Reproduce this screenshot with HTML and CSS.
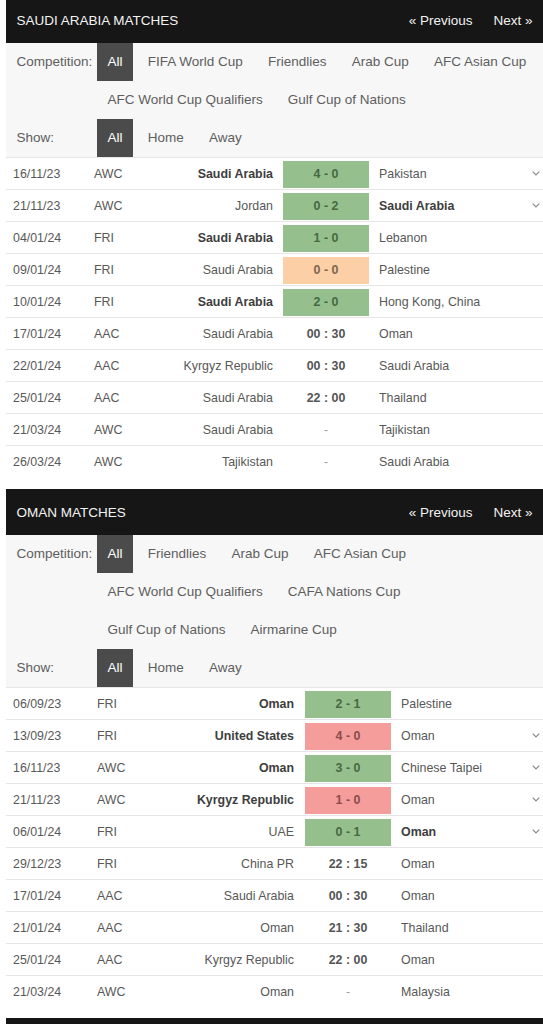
FILE: index.html
```html
<!DOCTYPE html>
<html lang="en">
<head>
<meta charset="utf-8">
<title>Matches</title>
<link rel="stylesheet" href="styles.css">
</head>
<body>
<div class="page">

  <section class="block block--sa">
    <div class="block-head">
      <span class="block-title">SAUDI ARABIA MATCHES</span>
      <nav class="pager"><a class="pager-link">« Previous</a><a class="pager-link">Next »</a></nav>
    </div>
    <div class="filters">
      <div class="filter-row">
        <span class="filter-label">Competition:</span>
        <div class="filter-items">
          <span class="chip is-active">All</span>
          <span class="chip">FIFA World Cup</span>
          <span class="chip">Friendlies</span>
          <span class="chip">Arab Cup</span>
          <span class="chip">AFC Asian Cup</span>
          <span class="chip">AFC World Cup Qualifiers</span>
          <span class="chip">Gulf Cup of Nations</span>
        </div>
      </div>
      <div class="filter-row">
        <span class="filter-label">Show:</span>
        <div class="filter-items">
          <span class="chip is-active">All</span>
          <span class="chip">Home</span>
          <span class="chip">Away</span>
        </div>
      </div>
    </div>
    <div class="matches">
      <div class="match"><span class="m-date">16/11/23</span><span class="m-comp">AWC</span><span class="m-home b">Saudi Arabia</span><span class="m-score win">4 - 0</span><span class="m-away">Pakistan</span><span class="m-more"><svg class="chev" viewBox="0 0 8 5"><polyline points="0.7,0.7 4,4 7.3,0.7"/></svg></span></div>
      <div class="match"><span class="m-date">21/11/23</span><span class="m-comp">AWC</span><span class="m-home">Jordan</span><span class="m-score win">0 - 2</span><span class="m-away b">Saudi Arabia</span><span class="m-more"><svg class="chev" viewBox="0 0 8 5"><polyline points="0.7,0.7 4,4 7.3,0.7"/></svg></span></div>
      <div class="match"><span class="m-date">04/01/24</span><span class="m-comp">FRI</span><span class="m-home b">Saudi Arabia</span><span class="m-score win">1 - 0</span><span class="m-away">Lebanon</span><span class="m-more"></span></div>
      <div class="match"><span class="m-date">09/01/24</span><span class="m-comp">FRI</span><span class="m-home">Saudi Arabia</span><span class="m-score draw">0 - 0</span><span class="m-away">Palestine</span><span class="m-more"></span></div>
      <div class="match"><span class="m-date">10/01/24</span><span class="m-comp">FRI</span><span class="m-home b">Saudi Arabia</span><span class="m-score win">2 - 0</span><span class="m-away">Hong Kong, China</span><span class="m-more"></span></div>
      <div class="match"><span class="m-date">17/01/24</span><span class="m-comp">AAC</span><span class="m-home">Saudi Arabia</span><span class="m-score time">00 : 30</span><span class="m-away">Oman</span><span class="m-more"></span></div>
      <div class="match"><span class="m-date">22/01/24</span><span class="m-comp">AAC</span><span class="m-home">Kyrgyz Republic</span><span class="m-score time">00 : 30</span><span class="m-away">Saudi Arabia</span><span class="m-more"></span></div>
      <div class="match"><span class="m-date">25/01/24</span><span class="m-comp">AAC</span><span class="m-home">Saudi Arabia</span><span class="m-score time">22 : 00</span><span class="m-away">Thailand</span><span class="m-more"></span></div>
      <div class="match"><span class="m-date">21/03/24</span><span class="m-comp">AWC</span><span class="m-home">Saudi Arabia</span><span class="m-score tbd">-</span><span class="m-away">Tajikistan</span><span class="m-more"></span></div>
      <div class="match"><span class="m-date">26/03/24</span><span class="m-comp">AWC</span><span class="m-home">Tajikistan</span><span class="m-score tbd">-</span><span class="m-away">Saudi Arabia</span><span class="m-more"></span></div>
    </div>
  </section>

  <section class="block block--om">
    <div class="block-head">
      <span class="block-title">OMAN MATCHES</span>
      <nav class="pager"><a class="pager-link">« Previous</a><a class="pager-link">Next »</a></nav>
    </div>
    <div class="filters">
      <div class="filter-row">
        <span class="filter-label">Competition:</span>
        <div class="filter-items">
          <span class="chip is-active">All</span>
          <span class="chip">Friendlies</span>
          <span class="chip">Arab Cup</span>
          <span class="chip">AFC Asian Cup</span>
          <span class="chip">AFC World Cup Qualifiers</span>
          <span class="chip">CAFA Nations Cup</span>
          <span class="chip">Gulf Cup of Nations</span>
          <span class="chip">Airmarine Cup</span>
        </div>
      </div>
      <div class="filter-row">
        <span class="filter-label">Show:</span>
        <div class="filter-items">
          <span class="chip is-active">All</span>
          <span class="chip">Home</span>
          <span class="chip">Away</span>
        </div>
      </div>
    </div>
    <div class="matches">
      <div class="match"><span class="m-date">06/09/23</span><span class="m-comp">FRI</span><span class="m-home b">Oman</span><span class="m-score win">2 - 1</span><span class="m-away">Palestine</span><span class="m-more"></span></div>
      <div class="match"><span class="m-date">13/09/23</span><span class="m-comp">FRI</span><span class="m-home b">United States</span><span class="m-score loss">4 - 0</span><span class="m-away">Oman</span><span class="m-more"><svg class="chev" viewBox="0 0 8 5"><polyline points="0.7,0.7 4,4 7.3,0.7"/></svg></span></div>
      <div class="match"><span class="m-date">16/11/23</span><span class="m-comp">AWC</span><span class="m-home b">Oman</span><span class="m-score win">3 - 0</span><span class="m-away">Chinese Taipei</span><span class="m-more"><svg class="chev" viewBox="0 0 8 5"><polyline points="0.7,0.7 4,4 7.3,0.7"/></svg></span></div>
      <div class="match"><span class="m-date">21/11/23</span><span class="m-comp">AWC</span><span class="m-home b">Kyrgyz Republic</span><span class="m-score loss">1 - 0</span><span class="m-away">Oman</span><span class="m-more"><svg class="chev" viewBox="0 0 8 5"><polyline points="0.7,0.7 4,4 7.3,0.7"/></svg></span></div>
      <div class="match"><span class="m-date">06/01/24</span><span class="m-comp">FRI</span><span class="m-home">UAE</span><span class="m-score win">0 - 1</span><span class="m-away b">Oman</span><span class="m-more"><svg class="chev" viewBox="0 0 8 5"><polyline points="0.7,0.7 4,4 7.3,0.7"/></svg></span></div>
      <div class="match"><span class="m-date">29/12/23</span><span class="m-comp">FRI</span><span class="m-home">China PR</span><span class="m-score time">22 : 15</span><span class="m-away">Oman</span><span class="m-more"></span></div>
      <div class="match"><span class="m-date">17/01/24</span><span class="m-comp">AAC</span><span class="m-home">Saudi Arabia</span><span class="m-score time">00 : 30</span><span class="m-away">Oman</span><span class="m-more"></span></div>
      <div class="match"><span class="m-date">21/01/24</span><span class="m-comp">AAC</span><span class="m-home">Oman</span><span class="m-score time">21 : 30</span><span class="m-away">Thailand</span><span class="m-more"></span></div>
      <div class="match"><span class="m-date">25/01/24</span><span class="m-comp">AAC</span><span class="m-home">Kyrgyz Republic</span><span class="m-score time">22 : 00</span><span class="m-away">Oman</span><span class="m-more"></span></div>
      <div class="match"><span class="m-date">21/03/24</span><span class="m-comp">AWC</span><span class="m-home">Oman</span><span class="m-score tbd">-</span><span class="m-away">Malaysia</span><span class="m-more"></span></div>
    </div>
  </section>

  <section class="block">
    <div class="block-head"></div>
  </section>

</div>
</body>
</html>
```

FILE: styles.css
```css
* { box-sizing: border-box; }

html, body {
  margin: 0;
  padding: 0;
  background: #ffffff;
}

body {
  font-family: "Liberation Sans", Arial, sans-serif;
  color: #555555;
  overflow: hidden;
}

.page {
  margin: -3px 0 0 6px;
  width: 537px;
}

.block {
  margin-bottom: 12px;
}

.block--om {
  margin-bottom: 11px;
}

/* header bar */
.block-head {
  height: 46px;
  background: #161616;
  color: #f2f2f2;
  display: flex;
  align-items: center;
  justify-content: space-between;
  padding: 0 0 0 10.5px;
  font-size: 13.5px;
}

.block-title {
  white-space: nowrap;
}

.pager {
  display: flex;
}

.pager-link {
  padding: 0 10.5px;
  color: #f2f2f2;
  white-space: nowrap;
}

/* filters */
.filters {
  background: #f7f7f7;
  padding-left: 10.5px;
  font-size: 13.5px;
}

.filter-row {
  display: grid;
  grid-template-columns: 80.5px 1fr;
}

.filter-label {
  line-height: 38px;
  color: #5e5e5e;
  white-space: nowrap;
}

.filter-items {
  display: flex;
  flex-wrap: wrap;
  column-gap: 4px;
}

.chip {
  height: 38px;
  line-height: 38px;
  padding: 0 10.6px;
  color: #5e5e5e;
  white-space: nowrap;
}

.chip.is-active {
  background: #4b4b4b;
  color: #ffffff;
}

/* matches */
.match {
  display: grid;
  height: 32px;
  border-top: 1px solid #e6e6e6;
  font-size: 12.4px;
  color: #585858;
  align-items: center;
}

.block--sa .match {
  grid-template-columns: 82px 60px 135px 86px 146px 28px;
}

.block--om .match {
  grid-template-columns: 85px 60px 154px 86px 124px 28px;
}

.m-date {
  padding-left: 7px;
  white-space: nowrap;
}

.m-comp {
  padding-left: 6px;
}

.m-home {
  text-align: right;
  padding-right: 10px;
  white-space: nowrap;
}

.block--om .m-home {
  padding-right: 11px;
}

.m-away {
  padding-left: 10px;
  white-space: nowrap;
}

.b {
  font-weight: bold;
  color: #3e3e3e;
}

.m-score {
  height: 27px;
  margin-top: 2px;
  line-height: 27px;
  text-align: center;
  font-weight: bold;
  align-self: center;
}

.m-score.win {
  background: #95c08d;
  color: #476843;
}

.m-score.draw {
  background: #fccfa7;
  color: #7b6650;
}

.m-score.loss {
  background: #f59d9b;
  color: #8a4c4c;
}

.m-score.time {
  background: transparent;
  color: #555555;
}

.m-score.tbd {
  background: transparent;
  font-weight: normal;
  color: #a0a0a0;
}

.m-more {
  display: flex;
  justify-content: flex-end;
  align-items: center;
  padding-right: 3.5px;
}

.chev {
  width: 8px;
  height: 5px;
  fill: none;
  stroke: #8a8a8a;
  stroke-width: 1.2;
  display: block;
}
```
